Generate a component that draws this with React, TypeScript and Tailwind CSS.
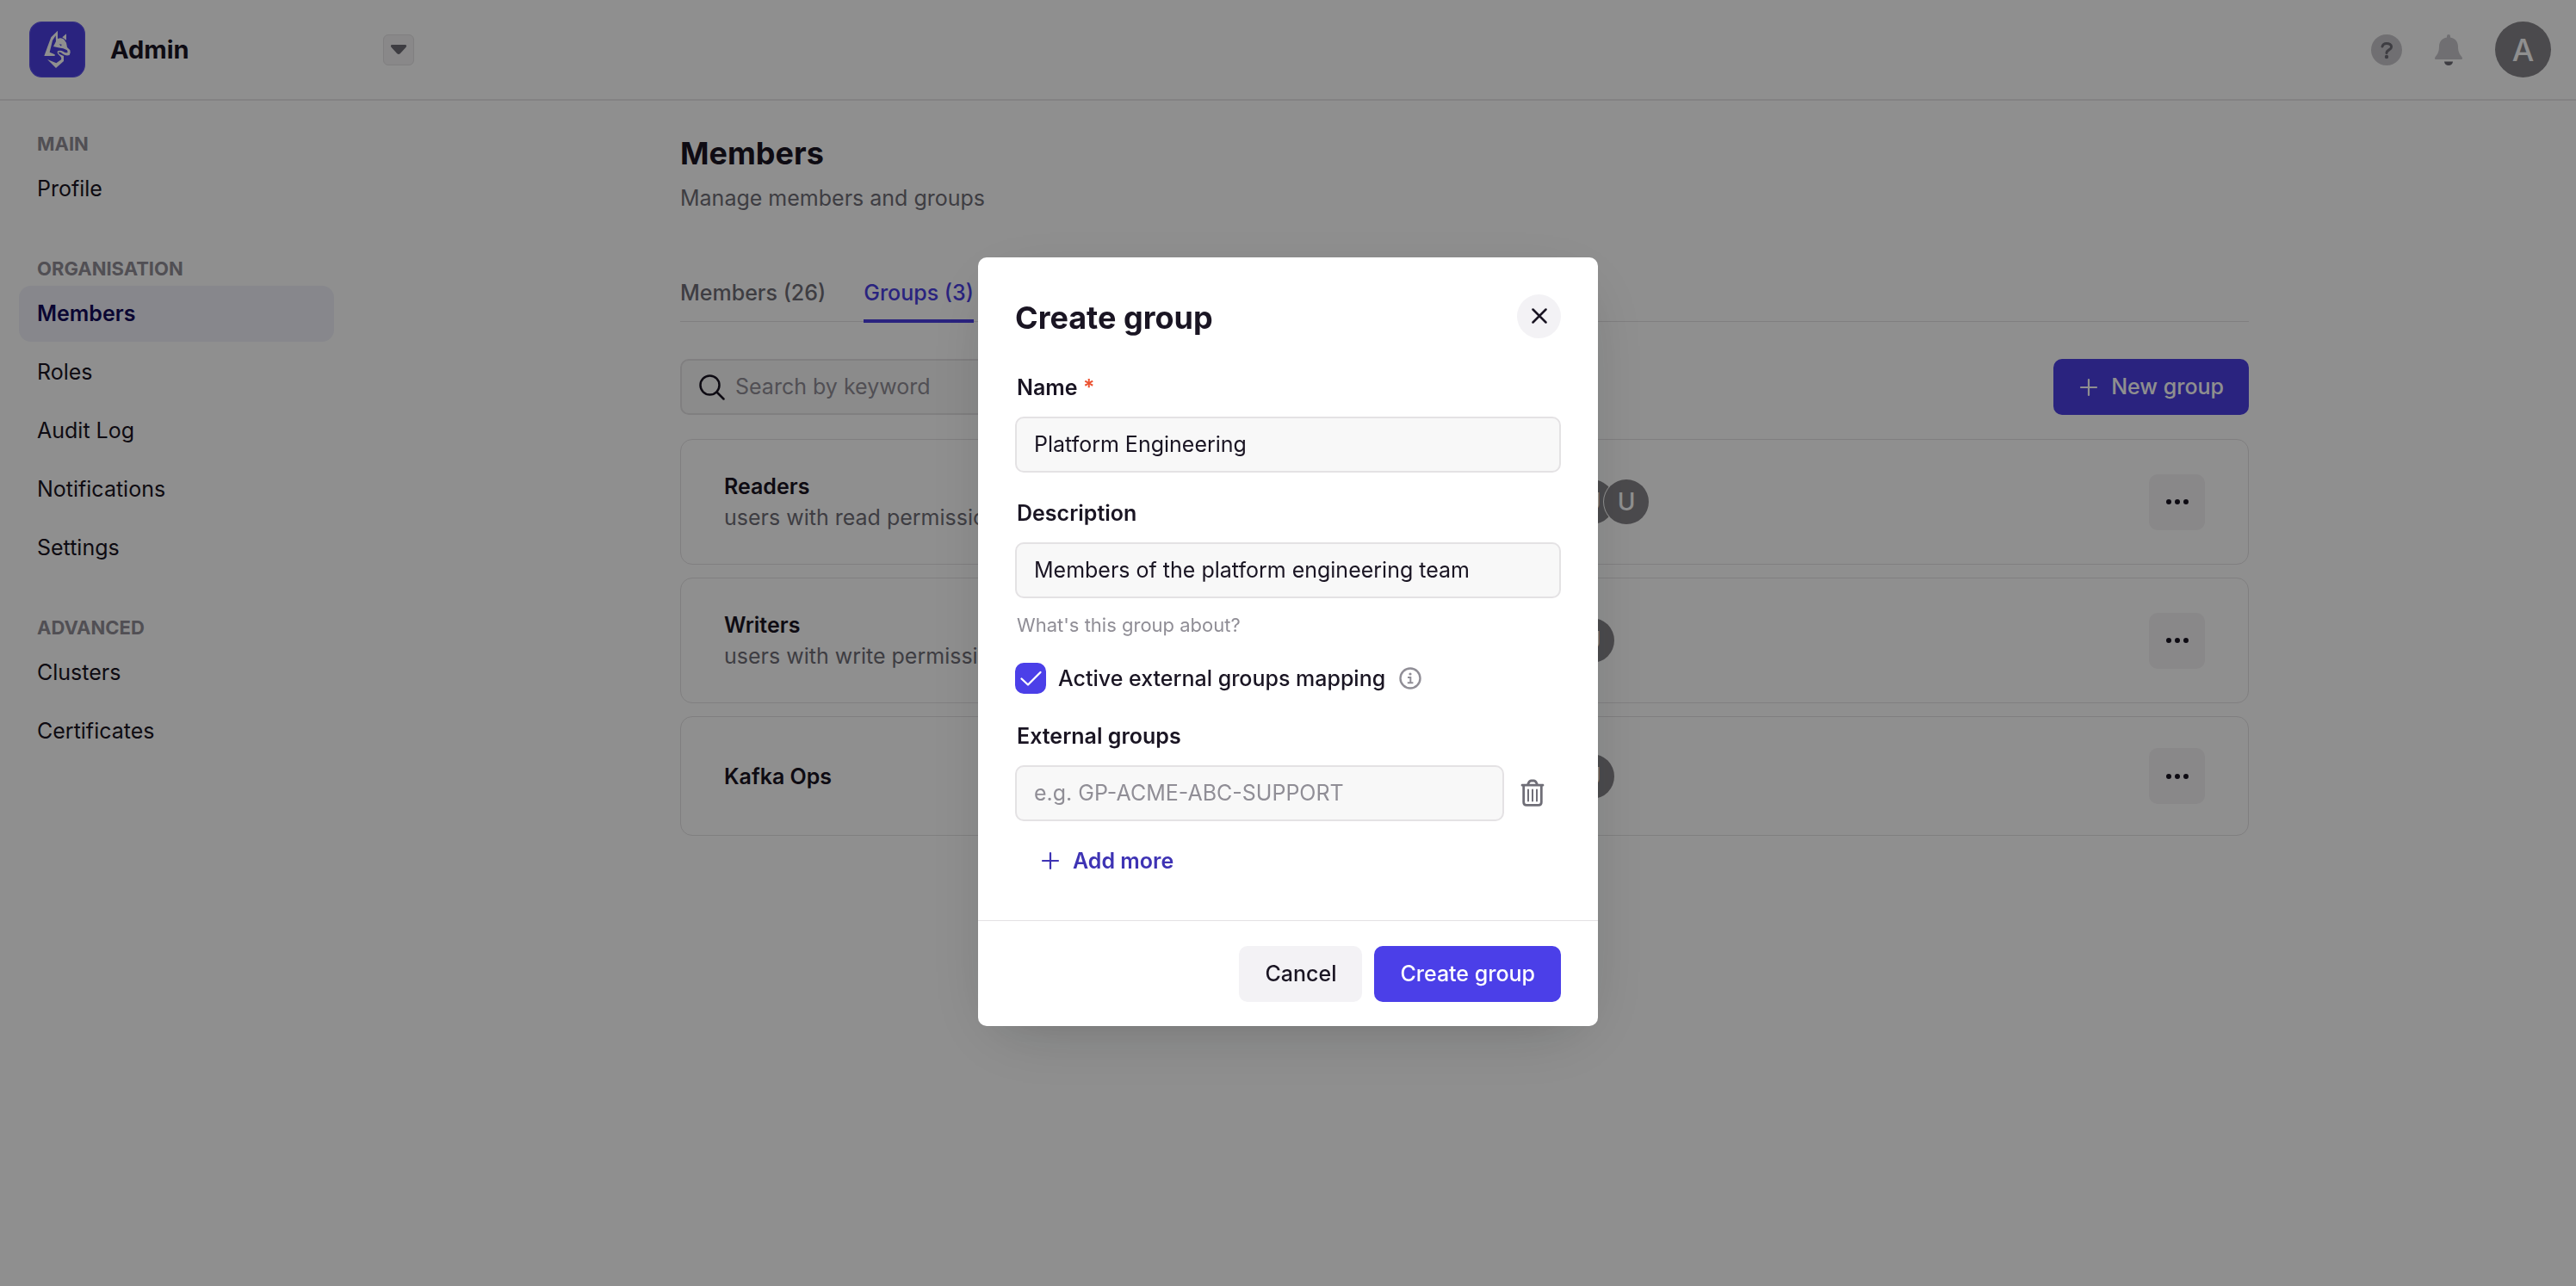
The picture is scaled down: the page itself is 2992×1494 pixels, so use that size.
import { useState } from "react";

function Logo() {
  return (
    <svg viewBox="0 0 195 195" className="size-[65px] shrink-0" role="img" aria-label="Logo">
      <rect x="2" y="2" width="191" height="191" rx="42" fill="#4b3fe3" stroke="#5b50ea" strokeWidth="4" />
      <g fill="#ffffff">
        <path d="M99 32 L99 60 Q112 54 121 62 L129 74 L132 90 L142 100 Q145 108 140 117 Q128 121 117 113 Q108 105 102 107 Q101 110 106 114 L120 120 L120 138 L93 162 L63 132 L94 145 L111 133 Q114 125 106 119 Q95 111 99 103 Q108 99 119 105 Q128 112 134 107 L132 100 L118 94 Q100 91 84 87 L93 69 L92 49 L81 66 L71 107 L89 115 L89 120 L52 120 L65 84 L76 55 Z" />
        <path d="M129 43 L129 65 L115 55 Z" />
      </g>
      <path d="M104 79 L113 80 L111 86 Z" fill="#4b3fe3" />
    </svg>
  );
}

function PlusIcon() {
  return (
    <svg viewBox="0 0 24 24" className="size-6 shrink-0" fill="none" stroke="currentColor" strokeWidth="2.200" strokeLinecap="round" aria-hidden="true">
      <path d="M12 3v18M3 12h18" />
    </svg>
  );
}

function HelpIcon() {
  return (
    <svg viewBox="0 0 36 36" className="size-9" aria-hidden="true">
      <circle cx="18" cy="18" r="18" fill="#c8c7cb" />
      <path d="M13 14c.6-2.500 2.400-3.600 5-3.600 3.200 0 5.600 1.500 5.600 4 0 3.600-5.600 3.400-5.600 7.200" fill="none" stroke="#6f6e77" strokeWidth="3" strokeLinecap="round" />
      <circle cx="18" cy="26" r="2.200" fill="#6f6e77" />
    </svg>
  );
}

function BellIcon() {
  return (
    <svg viewBox="0 0 36 36" className="size-9" aria-hidden="true">
      <path d="M18 0a2 2 0 0 1 2 2v1.500c5.600 1 9 5 9 10.500 0 6 1.600 8.800 4.600 12.400.9 1.300.4 2.600-1.400 2.600H3.800c-1.800 0-2.300-1.300-1.400-2.600C5.400 22.800 7 20 7 14 7 8.500 10.400 4.500 16 3.500V2a2 2 0 0 1 2-2z" fill="#c8c7cb" />
      <path d="M13 31.500h10a5 4.500 0 0 1-10 0z" fill="#6f6e77" />
    </svg>
  );
}

function SearchIcon() {
  return (
    <svg viewBox="0 0 30 30" className="size-[30px] shrink-0 text-[#1a1523]" fill="none" stroke="currentColor" strokeWidth="2.500" strokeLinecap="round" aria-hidden="true">
      <circle cx="12.500" cy="12.500" r="11" />
      <path d="M20.500 20.500l8 8" />
    </svg>
  );
}

function InfoIcon() {
  return (
    <svg viewBox="0 0 26 26" className="size-[26px] shrink-0 text-[#908e96]" fill="none" stroke="currentColor" strokeWidth="2.400" aria-hidden="true">
      <circle cx="13" cy="13" r="11.500" />
      <path d="M10 12h3.300V18M9.800 18.200h6.600" strokeWidth="2" />
      <circle cx="13" cy="8" r="1.600" fill="currentColor" stroke="none" />
    </svg>
  );
}

function TrashIcon() {
  return (
    <svg viewBox="0 0 28 32" className="h-8 w-7 text-[#6f6e77]" fill="none" stroke="currentColor" strokeWidth="2.800" strokeLinecap="round" strokeLinejoin="round" aria-hidden="true">
      <path d="M2 7.200h24M8.500 6.500l.8-1.800q1.200-2.700 3.200-2.700h3q2 0 3.200 2.700l.8 1.800M3.700 8v19q0 3.300 3.300 3.300h14q3.300 0 3.300-3.300V8" />
      <path d="M9 12.500v13M14 12.500v13M19 12.500v13" strokeWidth="2" />
    </svg>
  );
}

const sections = [
  { title: "MAIN", items: ["Profile"] },
  { title: "ORGANISATION", items: ["Members", "Roles", "Audit Log", "Notifications", "Settings"] },
  { title: "ADVANCED", items: ["Clusters", "Certificates"] },
];

const groups = [
  { name: "Readers", description: "users with read permissions", members: 5 },
  { name: "Writers", description: "users with write permissions", members: 4 },
  { name: "Kafka Ops", description: "", members: 4 },
];

function Header() {
  return (
    <header className="flex h-[117px] items-center justify-between border-b-2 border-[#e9e8ea] pr-[29px] pl-[34px]">
      <div className="flex items-center">
        <Logo />
        <span className="ml-[29px] w-[317px] text-[29px] leading-9 font-bold">Admin</span>
        <button type="button" aria-label="Switch workspace" className="flex size-9 items-center justify-center rounded-md border border-[#e4e2e4] bg-[#f4f2f4] text-[#6f6e77]">
          <svg viewBox="0 0 20 12" className="h-3 w-5" fill="currentColor" aria-hidden="true">
            <path d="M2.500 0h15q2 0 1.500 2-.2.600-.8 1.200L12 9.900q-2 2.200-4 0L1.800 3.200Q1.200 2.600 1 2 .5 0 2.500 0z" />
          </svg>
        </button>
      </div>
      <div className="flex items-center">
        <button type="button" aria-label="Help"><HelpIcon /></button>
        <button type="button" aria-label="Notifications" className="ml-9"><BellIcon /></button>
        <button type="button" aria-label="Account" className="ml-9 flex size-[65px] items-center justify-center rounded-full bg-[#868489] text-4xl font-medium text-white">A</button>
      </div>
    </header>
  );
}

function Sidebar() {
  return (
    <nav className="flex w-[410px] shrink-0 flex-col gap-10 px-[22px] pt-[30px]">
      {sections.map((s) => (
        <section key={s.title}>
          <h2 className="h-10 px-[21px] text-[22px] leading-10 font-bold text-[#908e96]">{s.title}</h2>
          <ul className="flex flex-col gap-[3px]">
            {s.items.map((item) => (
              <li key={item}>
                <a
                  href="#"
                  className={
                    item === "Members"
                      ? "flex h-[65px] items-center rounded-[14px] bg-[#f0f1fa] px-[21px] text-[25px] font-semibold text-[#130c5a]"
                      : "flex h-[65px] items-center rounded-[14px] px-[21px] text-[25px]"
                  }
                >
                  {item}
                </a>
              </li>
            ))}
          </ul>
        </section>
      ))}
    </nav>
  );
}

function GroupCard({ name, description, members }: { name: string; description: string; members: number }) {
  return (
    <li className="grid grid-cols-2 items-center rounded-[14px] border border-[#e4e2e4] px-[50px] py-9">
      <div className="text-[25px] leading-9">
        <h3 className="font-semibold">{name}</h3>
        {description && <p className="text-[#6f6e77]">{description}</p>}
      </div>
      <div className="flex items-center justify-between pl-0.5">
        <div className="flex -space-x-3">
          {Array.from({ length: members }, (_, i) => (
            <span key={i} className="flex size-[52px] items-center justify-center rounded-full bg-[#868489] text-[28px] font-medium text-white shadow-[0_0_0_1px_#ffffff]">U</span>
          ))}
        </div>
        <button type="button" aria-label={`Actions for ${name}`} className="flex size-[65px] items-center justify-center rounded-[10px] bg-[#f4f2f4]">
          <svg viewBox="0 0 26 6" className="h-1.5 w-[26px]" fill="currentColor" aria-hidden="true">
            <circle cx="3" cy="3" r="3" />
            <circle cx="13" cy="3" r="3" />
            <circle cx="23" cy="3" r="3" />
          </svg>
        </button>
      </div>
    </li>
  );
}

function MembersPage() {
  return (
    <main className="flex flex-1 justify-center pt-[39px]">
      <div className="w-full max-w-[1822px]">
        <h1 className="text-4xl leading-[44px] font-bold">Members</h1>
        <p className="mt-3 text-[25px] leading-9 text-[#6f6e77]">Manage members and groups</p>
        <div role="tablist" className="mt-[74px] flex gap-11 border-b border-[#e4e2e4] text-[25px] leading-9 font-medium">
          <button type="button" role="tab" aria-selected="false" className="-mb-0.5 border-b-4 border-transparent pb-[13px] text-[#6f6e77]">Members (26)</button>
          <button type="button" role="tab" aria-selected="true" className="-mb-0.5 border-b-4 border-[#4b3fe3] pb-[13px] text-[#4b3fe3]">Groups (3)</button>
        </div>
        <div className="mt-[43px] flex items-center justify-between">
          <label className="flex h-[65px] w-[600px] items-center gap-3 rounded-[10px] border-2 border-[#e4e2e4] bg-[#f8f8f8] px-5">
            <SearchIcon />
            <input type="search" aria-label="Search by keyword" placeholder="Search by keyword" className="min-w-0 flex-1 bg-transparent text-[25px] outline-none placeholder:text-[#908e96]" />
          </label>
          <button type="button" className="flex h-[65px] items-center gap-3.5 rounded-[10px] bg-[#4b3fe3] px-[29px] text-[25px] font-medium text-white">
            <PlusIcon />
            New group
          </button>
        </div>
        <ul className="mt-7 flex flex-col gap-[15px]">
          {groups.map((g) => (
            <GroupCard key={g.name} {...g} />
          ))}
        </ul>
      </div>
    </main>
  );
}

function CreateGroupDialog() {
  const [name, setName] = useState("Platform Engineering");
  const [description, setDescription] = useState("Members of the platform engineering team");
  const [external, setExternal] = useState("");
  const [mapped, setMapped] = useState(true);

  return (
    <form
      role="dialog"
      aria-modal="true"
      aria-labelledby="dialog-title"
      onSubmit={(e) => e.preventDefault()}
      className="w-[720px] rounded-[10px] bg-white text-[25px] leading-9 shadow-[0_20px_76px_-20px_rgba(14,18,22,0.2),0_20px_40px_-30px_rgba(14,18,22,0.1)]"
    >
      <div className="px-[43px] pt-[43px] pb-9">
        <div className="flex items-start justify-between">
          <h2 id="dialog-title" className="text-4xl leading-[54px] font-bold">Create group</h2>
          <button type="button" aria-label="Close" className="flex size-[51px] items-center justify-center rounded-full bg-[#f3f2f5]">
            <svg viewBox="0 0 18 18" className="size-[18px]" fill="none" stroke="currentColor" strokeWidth="2.500" strokeLinecap="round" aria-hidden="true">
              <path d="M1.500 1.500l15 15M16.500 1.500l-15 15" />
            </svg>
          </button>
        </div>

        <label htmlFor="group-name" className="mt-9 block px-0.5 font-semibold">
          Name <span className="text-[#ec5231]">*</span>
        </label>
        <input id="group-name" value={name} onChange={(e) => setName(e.target.value)} className="mt-4 h-[65px] w-full rounded-[10px] border-2 border-[#e4e2e4] bg-[#f8f8f8] px-5 outline-none" />

        <label htmlFor="group-description" className="mt-[29px] block px-0.5 font-semibold">Description</label>
        <input id="group-description" value={description} onChange={(e) => setDescription(e.target.value)} className="mt-4 h-[65px] w-full rounded-[10px] border-2 border-[#e4e2e4] bg-[#f8f8f8] px-5 outline-none" />
        <p className="mt-4 px-0.5 text-[22px] leading-[30px] text-[#908e96]">What's this group about?</p>

        <div className="mt-[29px] flex items-center">
          <span className="relative flex size-9">
            <input id="group-mapping" type="checkbox" checked={mapped} onChange={(e) => setMapped(e.target.checked)} className="peer size-9 appearance-none rounded-[10px] border-2 border-[#e4e2e4] checked:border-[#4b3fe8] checked:bg-[#4b3fe8]" />
            <svg viewBox="0 0 36 36" className="pointer-events-none absolute inset-0 hidden size-9 peer-checked:block" fill="none" stroke="#ffffff" strokeWidth="2.300" strokeLinecap="round" strokeLinejoin="round" aria-hidden="true">
              <path d="M7.500 18.500l7.500 7L29.500 11" />
            </svg>
          </span>
          <label htmlFor="group-mapping" className="mr-4 ml-3.5 font-medium">Active external groups mapping</label>
          <InfoIcon />
        </div>

        <label htmlFor="external-group" className="mt-[31px] block px-0.5 font-semibold">External groups</label>
        <div className="mt-4 flex items-center">
          <input id="external-group" value={external} onChange={(e) => setExternal(e.target.value)} placeholder="e.g. GP-ACME-ABC-SUPPORT" className="h-[65px] min-w-0 flex-1 rounded-[10px] border-2 border-[#e4e2e4] bg-[#f8f8f8] px-5 outline-none placeholder:text-[#908e96]" />
          <button type="button" aria-label="Remove external group" className="flex h-[65px] w-[66px] items-center justify-center"><TrashIcon /></button>
        </div>
        <button type="button" className="mt-3.5 flex h-[65px] items-center gap-3.5 px-[29px] font-semibold text-[#3e33b4]">
          <PlusIcon />
          Add more
        </button>
      </div>

      <div className="flex justify-end gap-3.5 border-t border-[#e4e2e4] px-[43px] pt-[29px] pb-7 font-medium">
        <button type="button" className="h-[65px] rounded-[10px] bg-[#f3f2f5] px-[30px]">Cancel</button>
        <button type="submit" className="h-[65px] rounded-[10px] bg-[#4b3fe8] px-[30px] text-white">Create group</button>
      </div>
    </form>
  );
}

export default function App() {
  return (
    <div className="min-h-screen bg-white font-[Inter,sans-serif] text-[#1a1523]">
      <Header />
      <div className="flex">
        <Sidebar />
        <MembersPage />
      </div>
      <div className="fixed inset-0 flex items-center justify-center bg-black/44 pb-1">
        <CreateGroupDialog />
      </div>
    </div>
  );
}
